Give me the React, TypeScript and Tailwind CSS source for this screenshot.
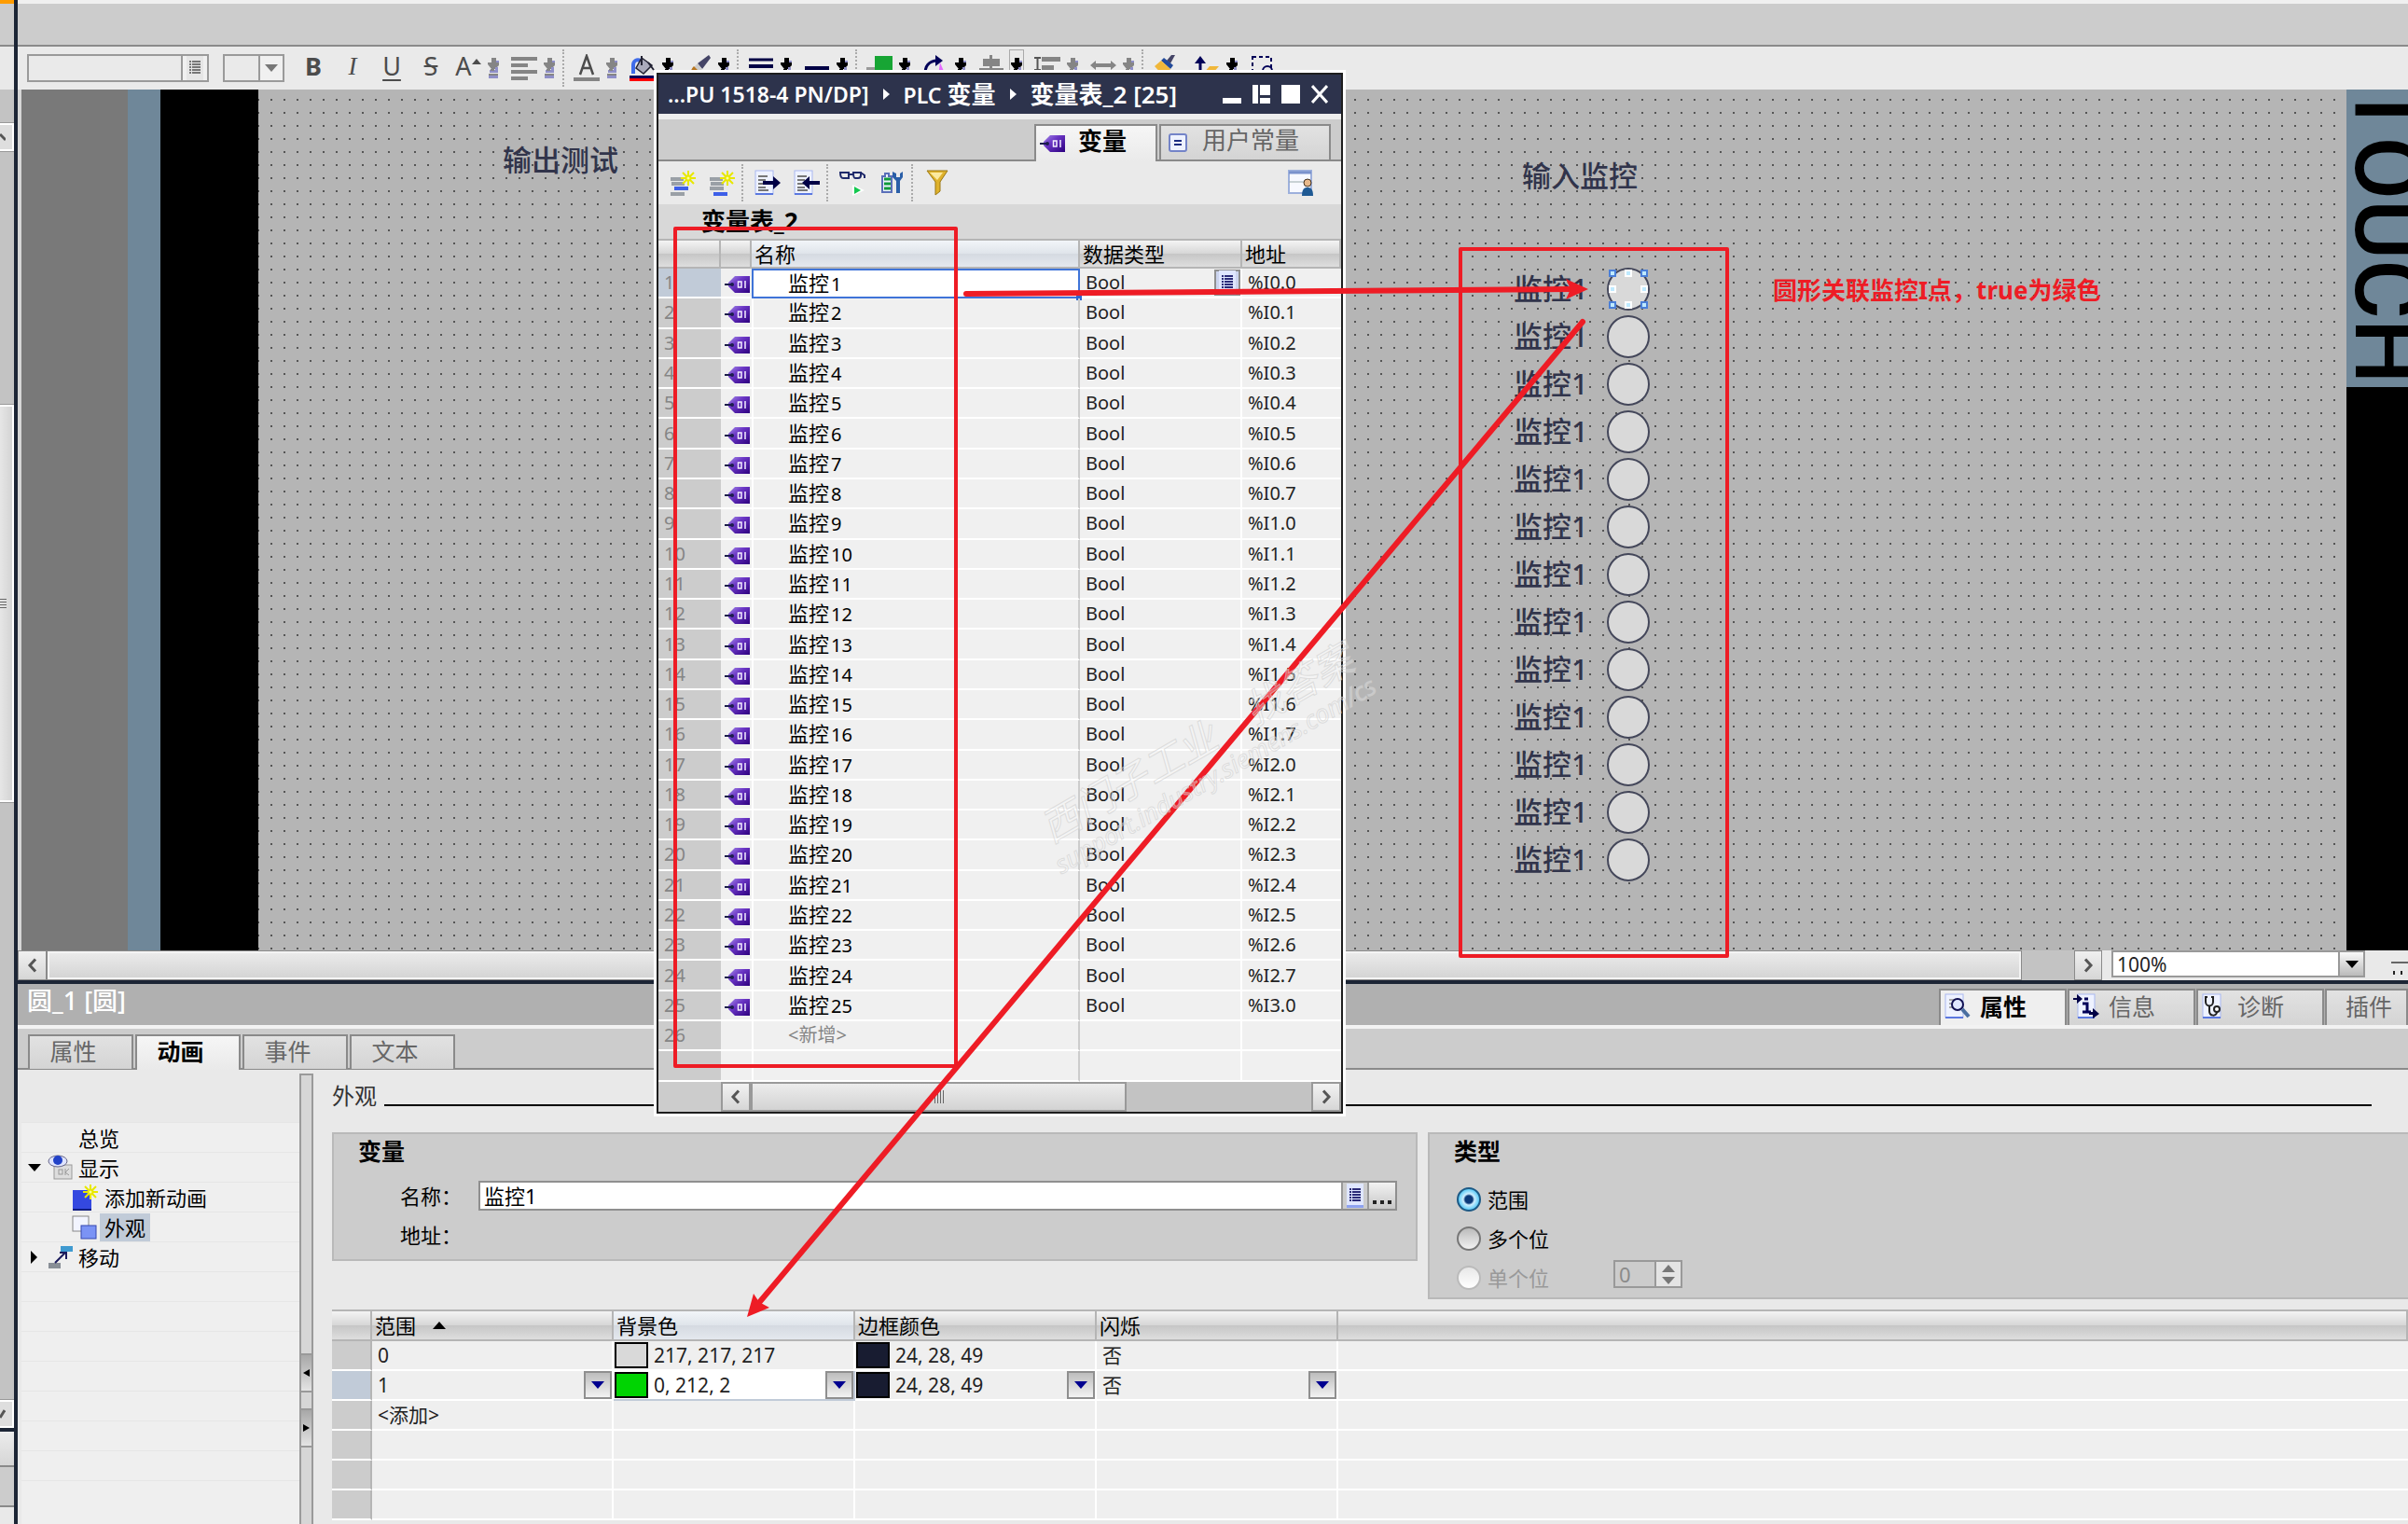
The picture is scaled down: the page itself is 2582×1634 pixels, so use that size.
import type { ReactNode } from "react";
import clsx from "clsx";

interface Tag {
  id: number;
  name: string;
  address: string;
}

const tags: Tag[] = Array.from({ length: 25 }, (_, i) => {
  // %I0.0, %I0.1, ... eight bits to a byte
  return { id: i + 1, name: `监控${i + 1}`, address: `%I${Math.floor(i / 8)}.${i % 8}` };
});

const lamps = Array.from({ length: 13 }, (_, i) => i);

/* ---------- small glyphs ---------- */

function Chevron({ dir }: { dir: "left" | "right" }) {
  return (
    <svg width="12" height="16" viewBox="0 0 12 16" fill="none" stroke="#555" strokeWidth="3">
      <path d={dir === "left" ? "M9 1.500L3 8l6 6.500" : "M3 1.500L9 8l-6 6.500"} />
    </svg>
  );
}

function Triangle({ color = "#000", up = false }: { color?: string; up?: boolean }) {
  return (
    <svg width="14" height="8" viewBox="0 0 14 8" fill={color}>
      <path d={up ? "M7 0l7 8H0z" : "M0 0h14L7 8z"} />
    </svg>
  );
}

function DropMark({ muted = false }: { muted?: boolean }) {
  const c = muted ? "#858585" : "#000";
  return (
    <svg width="12" height="22" viewBox="0 0 12 22">
      <path d="M4 0h5v5h3v3l-4 4H4L0 7V5h4z" fill={c} />
      <path d="M9 3h3v2H9zM8 10h3v3H8zM2 13h9v3H2z" fill="#8f8fc8" />
      <path d="M3 12h4v2H3zM1 17h10v2H1z" fill={c} />
      <path d="M1 19h10v3H1z" fill="#8f8fc8" />
    </svg>
  );
}

function TagIcon() {
  return (
    <svg width="27" height="18" viewBox="0 0 27 18">
      <defs>
        <linearGradient id="tag" x1="0" y1="0" x2="1" y2="1">
          <stop offset="0" stopColor="#a58be8" />
          <stop offset="0.4" stopColor="#6a35c4" />
          <stop offset="1" stopColor="#2d007f" />
        </linearGradient>
      </defs>
      <path d="M4 7L11 0h16v18H11L4 11z" fill="url(#tag)" />
      <path d="M0 9h8" stroke="#1c1c4d" strokeWidth="2" />
      <circle cx="8" cy="9" r="2" fill="#1c1c4d" />
      <path d="M14.500 6h3.500v6h-3.500zM22 5v8" fill="none" stroke="#f4eeff" strokeWidth="1.500" />
    </svg>
  );
}

function ListIcon({ muted = false }: { muted?: boolean }) {
  const c = muted ? "#777" : "#2b2b78";
  return (
    <svg width="18" height="26" viewBox="0 0 18 26">
      <rect x="0" y="0" width="18" height="26" fill={muted ? "#e6e6e6" : "#dfe6ff"} />
      {!muted && <rect x="0" y="23" width="18" height="3" fill="#8ea2f0" />}
      <path d="M3 6h2M3 9h2M3 12h2M3 15h2M3 18h2M6 6h9M6 9h9M6 12h9M6 15h9M6 18h9" stroke={c} strokeWidth="2" />
    </svg>
  );
}

function Star() {
  return (
    <g stroke="#e8e800" strokeWidth="2">
      <path d="M20 1v16M12 9h16M14 3l12 12M26 3L14 15" />
      <circle cx="20" cy="9" r="2.500" fill="#ffff9a" />
    </g>
  );
}

function AddRowIcon({ last = false }: { last?: boolean }) {
  return (
    <svg width="28" height="28" viewBox="0 0 28 28">
      <path d="M1 8h14v4H1zM2 13h14v4H2z" fill="#9aa0a6" />
      <path d={last ? "M1 18h15v4H1z" : "M1 24h15v4H1z"} fill="#9aa0a6" />
      <path d={last ? "M5 24h15v4H5z" : "M5 18h15v4H5z"} fill="#3d5fe8" />
      <Star />
    </svg>
  );
}

function PageIcon({ children }: { children: ReactNode }) {
  return (
    <svg width="28" height="28" viewBox="0 0 28 28">
      <rect x="1" y="1" width="19" height="25" fill="#eef2ff" stroke="#a9b8f0" />
      <path d="M1 26h19" stroke="#5b78e0" strokeWidth="2" />
      {children}
    </svg>
  );
}

const textLines = <path d="M4 7h10M4 11h8M4 15h10M4 19h8M4 22h11" stroke="#777" strokeWidth="2" />;

/* ---------- left neighbour pane ---------- */

function LeftStrip() {
  return (
    <aside className="flex w-[19px] shrink-0 flex-col overflow-hidden border-r-4 border-[#1c2535] bg-[#c3c3c3]">
      <div className="h-1 bg-[#ff9c00]" />
      <div className="h-[46px] border-b-2 border-[#8a8a8a] bg-[#ccc]" />
      <div className="h-[46px] bg-[#e9e9e9]" />
      <div className="mt-9 flex h-[30px] items-center justify-start border-2 border-l-0 border-white bg-[#dedede] outline outline-[#999]">
        <svg width="6" height="14" viewBox="0 0 6 14" stroke="#555" strokeWidth="3">
          <path d="M0 4l6 6" />
        </svg>
      </div>
      <div className="mt-[272px] flex h-[426px] items-center border-2 border-l-0 border-white bg-gradient-to-r from-[#e6e6e6] to-[#d4d4d4] outline outline-[#999]">
        <svg width="7" height="12" viewBox="0 0 7 12" stroke="#666" strokeWidth="1">
          <path d="M0 1.500h7M0 4.500h7M0 7.500h7M0 10.500h7" />
        </svg>
      </div>
      <div className="mt-auto flex h-[30px] items-center border-2 border-l-0 border-white bg-[#dedede] outline outline-[#999]">
        <svg width="6" height="14" viewBox="0 0 6 14" stroke="#555" strokeWidth="3">
          <path d="M0 11l5-8" />
        </svg>
      </div>
      <div className="h-1 bg-[#1c2535]" />
      <div className="h-9 bg-gradient-to-b from-[#ececec] to-[#d6d6d6]" />
      <div className="h-[45px] border-y-2 border-[#8a8a8a] bg-[#ccc]" />
      <div className="h-[18px] bg-[#e9e9e9]" />
    </aside>
  );
}

/* ---------- editor toolbar ---------- */

function Tool({ label, children, drop, muted, boxed }: {
  label: string;
  children: ReactNode;
  drop?: boolean;
  muted?: boolean;
  boxed?: boolean;
}) {
  return (
    <div className="flex h-10 items-center">
      <button aria-label={label} className="flex h-full w-[38px] items-center justify-center">{children}</button>
      {drop && (
        <button
          aria-label={`${label} ▾`}
          className={clsx("flex h-full w-4 items-center justify-center", boxed && "border border-[#aaa]")}
        >
          <DropMark muted={muted} />
        </button>
      )}
    </div>
  );
}

function Sep({ className = "h-10" }: { className?: string }) {
  return <div className={clsx("-mr-px w-px shrink-0 border-l-2 border-dotted border-[#aaa]", className)} />;
}

function FormatBar() {
  return (
    <div className="flex h-[46px] items-center bg-[#eaeaea] pl-2.5 text-[27px] leading-8 text-[#4c4c4c]">
      <div className="flex h-[30px] w-[195px] border-2 border-[#9a9a9a]">
        <input aria-label="字体" className="min-w-0 flex-1 bg-[#eaeaea]" />
        <button aria-label="字体列表" className="flex w-7 items-center justify-center border-l-2 border-[#9a9a9a] bg-[#f0f0f0]">
          <ListIcon muted />
        </button>
      </div>
      <div className="relative ml-[15px] h-[30px] w-[66px]">
        <select aria-label="字号" className="h-full w-full appearance-none border-2 border-[#9a9a9a] bg-[#eaeaea]" />
        <div className="pointer-events-none absolute inset-y-0 right-0 flex w-7 items-center justify-center border-2 border-[#9a9a9a] bg-[#f0f0f0]">
          <Triangle color="#777" />
        </div>
      </div>
      <div className="ml-2.5 flex items-center pb-1">
        <button className="w-[42px] font-bold">B</button>
        <button className="w-[42px] font-[Liberation_Serif] italic">I</button>
        <button className="w-[42px] underline underline-offset-4">U</button>
        <button className="w-[42px] line-through">S</button>
      </div>
      <div className="flex items-center gap-1.5">
        <Tool label="字号增减" drop muted>
          <span className="pb-1">A</span>
          <svg width="10" height="20" viewBox="0 0 10 20"><path d="M5 0l5 6H0z" fill="#4c4c4c" /></svg>
        </Tool>
        <Tool label="对齐" drop muted>
          <svg width="28" height="26" viewBox="0 0 28 26" stroke="#858585" strokeWidth="4">
            <path d="M0 3h28M0 10h18M0 17h28M0 24h18" />
          </svg>
        </Tool>
        <Sep />
        <Tool label="字体颜色" drop muted>
          <svg width="28" height="30" viewBox="0 0 28 30">
            <path d="M7 22L14 2l7 20M9.500 15h9" fill="none" stroke="#4c4c4c" strokeWidth="2.500" />
            <path d="M0 27h28" stroke="#858585" strokeWidth="4" />
          </svg>
        </Tool>
        <Tool label="填充" drop>
          <svg width="28" height="28" viewBox="0 0 28 28">
            <path d="M4 20V11c0-5 4-7 8-5" fill="none" stroke="#3f6be8" strokeWidth="4" />
            <path d="M13 3l11 8-9 9-8-6z" fill="#aab" stroke="#223" strokeWidth="1.500" />
            <path d="M13 1v10M20 8l6 8" stroke="#223" strokeWidth="2" />
            <path d="M0 22h28v3H0z" fill="#000058" />
            <path d="M0 25h28v3H0z" fill="#f00" />
          </svg>
        </Tool>
        <Tool label="画笔" drop>
          <svg width="26" height="28" viewBox="0 0 26 28">
            <path d="M24 0L12 9l5 6 9-12z" fill="#446" />
            <path d="M12 9l5 6-3 3-6-5z" fill="#ccc" />
            <path d="M8 12l6 6c-3 5-9 7-14 7 4-3 4-9 8-13z" fill="#b8761f" />
          </svg>
        </Tool>
        <Sep />
        <Tool label="线型" drop>
          <svg width="26" height="26" viewBox="0 0 26 26" stroke="#000045">
            <path d="M0 4h26" strokeWidth="3" /><path d="M0 11h26" strokeWidth="4" />
          </svg>
        </Tool>
        <Tool label="线宽" drop>
          <svg width="26" height="26" viewBox="0 0 26 26" stroke="#000045" strokeWidth="4"><path d="M0 13h26" /></svg>
        </Tool>
        <Sep />
        <Tool label="层" drop>
          <svg width="28" height="28" viewBox="0 0 28 28">
            <rect x="0" y="13" width="10" height="12" fill="#999" />
            <rect x="9" y="1" width="19" height="19" fill="#17a534" />
          </svg>
        </Tool>
        <Tool label="旋转" drop>
          <svg width="28" height="28" viewBox="0 0 28 28">
            <path d="M4 22C1 12 8 6 16 6" fill="none" stroke="#000058" strokeWidth="3" />
            <path d="M14 0l8 6-8 6z" fill="#000058" />
            <path d="M19 8l6 14h-8z" fill="#e56bff" />
          </svg>
        </Tool>
        <Tool label="排列" drop boxed>
          <svg width="26" height="28" viewBox="0 0 26 28" fill="#858585">
            <path d="M4 4h18v8H4zM11 0h3v20h-3zM0 14h26v3H0z" />
          </svg>
        </Tool>
        <Tool label="间距" drop muted>
          <svg width="28" height="28" viewBox="0 0 28 28">
            <path d="M8 2h20v5H8zM8 11h13v5H8zM8 22h20v5H8z" fill="#858585" />
            <path d="M0 3h7M0 16h7M3.500 3v13" stroke="#555" strokeWidth="2" />
          </svg>
        </Tool>
        <Tool label="同宽" drop muted>
          <svg width="28" height="24" viewBox="0 0 28 24">
            <path d="M0 9l6-5v3h16V4l6 5-6 5v-3H6v3z" fill="#858585" />
          </svg>
        </Tool>
        <Sep />
        <Tool label="格式刷">
          <svg width="24" height="28" viewBox="0 0 24 28">
            <path d="M22 0l-5 9-4-3 5-6z" fill="#446" />
            <path d="M10 3l10 8-3 4L7 6z" fill="#224a9a" />
            <path d="M7 6l10 9-6 9L0 12z" fill="#f0b73a" />
          </svg>
        </Tool>
        <Tool label="Tab 顺序" drop>
          <svg width="28" height="28" viewBox="0 0 28 28">
            <path d="M7 26V8" stroke="#000058" strokeWidth="3" /><path d="M1 9l6-8 6 8z" fill="#000058" />
            <path d="M10 20l7-8h10l-7 8z" fill="#f0b73a" />
          </svg>
        </Tool>
        <Tool label="选择">
          <svg width="26" height="28" viewBox="0 0 26 28" fill="none" stroke="#000058">
            <rect x="2" y="2" width="20" height="20" strokeWidth="2" strokeDasharray="4 3" />
            <circle cx="18" cy="17" r="5" strokeWidth="2" fill="#eaeaea" />
          </svg>
        </Tool>
      </div>
    </div>
  );
}

/* ---------- screen canvas ---------- */

function Handles() {
  const pos = [
    "left-0 top-0", "left-[17px] top-0", "right-0 top-0",
    "left-0 top-[17px]", "right-0 top-[17px]",
    "left-0 bottom-0", "left-[17px] bottom-0", "right-0 bottom-0",
  ];
  return (
    <>
      {pos.map((p, i) => (
        <span
          key={p}
          className={clsx("absolute h-2 w-2 border-2 bg-[#bfeaff]", p, i === 1 || i === 3 || i === 4 || i === 6 ? "border-white" : "border-[#4a7fd8]")}
        />
      ))}
    </>
  );
}

function Canvas() {
  return (
    <div className="flex h-[923px] shrink-0 overflow-hidden border-l-4 border-[#d6d6d6]">
      <div className="w-[114px] shrink-0 bg-[#797979]" />
      <div className="w-[35px] shrink-0 bg-[#6f8799]" />
      <div className="w-[105px] shrink-0 bg-black" />
      <div className="relative flex-1 bg-[#b5b5b5] bg-[conic-gradient(from_270deg_at_2px_2px,#555_90deg,transparent_0)] bg-[size:14px_14px] bg-[position:-1px_10px] text-[31px] leading-[51px] font-medium text-[#31344b]">
        <div className="absolute top-[50px] left-[262px]">输出测试</div>
        <div className="absolute top-[67px] left-[1355px]">输入监控</div>
        <div className="absolute top-[188px] left-[1346px] flex flex-col">
          {lamps.map((i) => <span key={i}>监控1</span>)}
        </div>
        <div className="absolute top-[188px] left-[1446px] flex flex-col">
          {lamps.map((i) => (
            <div key={i} className="flex h-[51px] items-center">
              <div className="relative h-[46px] w-[46px] rounded-full border-2 border-[#44475a] bg-[#d9d9d9]">
                {i === 0 && <Handles />}
              </div>
            </div>
          ))}
        </div>
      </div>
      <div className="w-[66px] shrink-0 bg-black">
        <div className="h-[319px] overflow-hidden bg-[#6f8799]">
          <div className="-mt-2 w-[86px] font-[Roboto] text-[98px] leading-[86px] font-medium text-black [writing-mode:vertical-rl]">
            TOUCH
          </div>
        </div>
      </div>
    </div>
  );
}

function CanvasScroll() {
  return (
    <div className="flex h-8 shrink-0 bg-[#e9e9e9]">
      <button aria-label="向左" className="flex w-[31px] items-center justify-center border border-[#8a8a8a] bg-gradient-to-b from-[#f0f0f0] to-[#d6d6d6]">
        <Chevron dir="left" />
      </button>
      <div className="flex flex-1 bg-[#c3c3c3] pr-14">
        <div className="flex-1 border border-[#8a8a8a] bg-gradient-to-b from-[#ececec] to-[#d3d3d3] shadow-[inset_0_0_0_2px_#f4f4f4]" />
      </div>
      <button aria-label="向右" className="flex w-[30px] items-center justify-center border border-[#8a8a8a] bg-gradient-to-b from-[#f0f0f0] to-[#d6d6d6]">
        <Chevron dir="right" />
      </button>
      <div className="relative ml-2.5 h-[29px] w-[272px]">
        <select aria-label="缩放" className="h-full w-full appearance-none border-2 border-[#999] bg-white pl-1 text-[21px] leading-6 text-[#222]">
          <option>100%</option>
        </select>
        <div className="pointer-events-none absolute inset-y-0 right-0 flex w-[29px] items-center justify-center border-2 border-[#999] bg-gradient-to-b from-[#fafafa] to-[#bbb]">
          <Triangle />
        </div>
      </div>
      <svg className="ml-7" width="18" height="32" viewBox="0 0 18 32">
        <path d="M0 13h18" stroke="#666" strokeWidth="2" />
        <path d="M3 22v4M11 22v4" stroke="#222" strokeWidth="2" />
      </svg>
    </div>
  );
}

/* ---------- inspector ---------- */

function InspectorTab({ label, active, icon }: { label: string; active?: boolean; icon?: ReactNode }) {
  return (
    <button
      className={clsx(
        "flex h-[39px] items-center border-2 border-b-0 border-[#8a8a8a] pb-1 text-[25px] leading-8",
        icon ? "w-[137px] gap-2.5 pl-1" : "w-[89px] pl-5",
        active ? "bg-[#efefef] font-bold text-black" : "bg-gradient-to-b from-[#e2e2e2] to-[#d4d4d4] text-[#666]",
      )}
    >
      {icon}
      {label}
    </button>
  );
}

function SubTab({ label, active }: { label: string; active?: boolean }) {
  return (
    <button
      className={clsx(
        "w-[113px] border-2 border-b-0 border-[#8a8a8a] pr-4 text-[25px] leading-8",
        active
          ? "h-[39px] bg-gradient-to-b from-[#f6f6f6] to-[#e9e9e9] pb-2 font-bold text-black"
          : "h-[37px] bg-gradient-to-b from-[#e2e2e2] to-[#d4d4d4] pb-1.5 text-[#666]",
      )}
    >
      {label}
    </button>
  );
}

function TreeRow({ children }: { children?: ReactNode }) {
  return <div className="flex h-8 shrink-0 items-center border-t border-[#e6e6e6]">{children}</div>;
}

function Tree() {
  return (
    <nav className="flex w-[302px] shrink-0 flex-col overflow-hidden pt-14 pl-1 text-[22px] leading-7">
      <div className="flex-1 bg-[#efefef]">
        <TreeRow><span className="pl-[61px]">总览</span></TreeRow>
        <TreeRow>
          <span className="flex w-7 justify-center"><Triangle /></span>
          <svg width="28" height="28" viewBox="0 0 28 28">
            <rect x="7" y="11" width="19" height="15" fill="#ddd" stroke="#999" />
            <ellipse cx="11" cy="7" rx="10" ry="6" fill="#dfe4ff" stroke="#668" />
            <circle cx="11" cy="6" r="5" fill="#2242c8" />
            <rect x="12" y="16" width="4" height="5" fill="none" stroke="#999" />
            <path d="M19 15v7M23 15l-4 4 4 3" fill="none" stroke="#999" />
          </svg>
          <span className="pl-[5px]">显示</span>
        </TreeRow>
        <TreeRow>
          <svg className="ml-[54px]" width="30" height="30" viewBox="0 0 30 30">
            <rect x="1" y="7" width="20" height="21" fill="#3448e0" />
            <path d="M1 28h20" stroke="#101c80" strokeWidth="2" />
            <Star />
          </svg>
          <span className="pl-[5px]">添加新动画</span>
        </TreeRow>
        <TreeRow>
          <svg className="ml-[54px]" width="28" height="28" viewBox="0 0 28 28">
            <rect x="1" y="2" width="17" height="16" fill="#f2f4ff" stroke="#888" />
            <rect x="10" y="12" width="16" height="14" fill="#7b93f5" stroke="#3547b0" />
          </svg>
          <span className="ml-[2px] bg-[#c1cbd8] px-[5px] py-[1px]">外观</span>
        </TreeRow>
        <TreeRow>
          <span className="flex w-7 justify-center">
            <svg width="8" height="14" viewBox="0 0 8 14"><path d="M0 0l7 7-7 7z" /></svg>
          </span>
          <svg width="28" height="28" viewBox="0 0 28 28">
            <rect x="14" y="2" width="13" height="6" fill="#3f9ad0" />
            <rect x="1" y="20" width="13" height="6" fill="#888e96" />
            <path d="M8 20L19 9M13 9h7v7" fill="none" stroke="#1b1b5c" strokeWidth="2" />
          </svg>
          <span className="pl-[5px]">移动</span>
        </TreeRow>
        {Array.from({ length: 8 }, (_, i) => <TreeRow key={i} />)}
      </div>
    </nav>
  );
}

function Splitter() {
  return (
    <div className="mt-1 flex w-[15px] shrink-0 flex-col border-2 border-b-0 border-[#9a9a9a] bg-[#d6d6d6] pt-[298px]">
      <button aria-label="收起" className="flex h-[42px] items-center justify-center border-y-2 border-[#999] bg-gradient-to-b from-[#a8a8a8] to-[#e4e4e4]">
        <svg width="7" height="8" viewBox="0 0 7 8"><path d="M7 0v8L0 4z" /></svg>
      </button>
      <button aria-label="展开" className="mt-[17px] flex h-[42px] items-center justify-center border-y-2 border-[#999] bg-gradient-to-b from-[#a8a8a8] to-[#e4e4e4]">
        <svg width="7" height="8" viewBox="0 0 7 8"><path d="M0 0v8l7-4z" /></svg>
      </button>
    </div>
  );
}

function Radio({ label, checked, disabled }: { label: string; checked?: boolean; disabled?: boolean }) {
  return (
    <label className={clsx("flex h-[42px] items-center gap-[7px]", disabled && "text-[#999]")}>
      <input
        type="radio"
        name="kind"
        defaultChecked={checked}
        disabled={disabled}
        className={clsx(
          "h-[26px] w-[26px] shrink-0 appearance-none rounded-full border-2 border-[#777] bg-gradient-to-b from-[#bbb] to-[#f2f2f2]",
          "checked:border-[#1d5a86] checked:bg-[radial-gradient(circle,#0b3a7a_0_4px,#cfefff_6px,#47c4f5_12px)]",
          "disabled:border-[#bbb] disabled:from-[#e8e8e8] disabled:to-white",
        )}
      />
      {label}
    </label>
  );
}

function VariablePanel() {
  return (
    <section className="h-[138px] w-[1164px] border-2 border-[#b9b9b9] bg-[#ccc]">
      <h3 className="pt-0.5 pl-[26px] text-[25px] leading-8 font-bold">变量</h3>
      <div className="mt-4 flex h-8 items-center pr-5 pl-[71px]">
        <label htmlFor="tagName" className="w-[84px]">名称：</label>
        <div className="flex h-8 flex-1 border-2 border-[#8f8f8f] bg-white">
          <input id="tagName" defaultValue="监控1" className="min-w-0 flex-1 pl-1" />
          <button aria-label="选择变量" className="flex w-7 items-center justify-center border-l-2 border-[#999] bg-[#ccc]"><ListIcon /></button>
          <button aria-label="浏览" className="flex w-[30px] items-end justify-center border-l-2 border-[#999] bg-gradient-to-b from-[#f2f2f2] to-[#c8c8c8] pb-1">
            <svg width="20" height="5" viewBox="0 0 20 5" fill="#222"><path d="M0 0h4v4H0zM8 0h4v4H8zM16 0h4v4h-4z" /></svg>
          </button>
        </div>
      </div>
      <div className="mt-2.5 pl-[71px] leading-8">地址：</div>
    </section>
  );
}

function TypePanel() {
  return (
    <section className="h-[179px] flex-1 border-2 border-r-0 border-[#b9b9b9] bg-[#ccc] pl-[26px]">
      <h3 className="pt-0.5 pb-[15px] text-[25px] leading-8 font-bold">类型</h3>
      <fieldset className="pl-[3px]">
        <Radio label="范围" checked />
        <Radio label="多个位" />
        <div className="flex items-center">
          <div className="w-[168px]"><Radio label="单个位" disabled /></div>
          <div className="mb-2 flex h-[30px] w-[74px] border-2 border-[#999] text-[#8a8a8a]">
            <input aria-label="位号" defaultValue="0" disabled className="min-w-0 flex-1 pl-1" />
            <div className="flex w-7 flex-col border-l-2 border-[#999] bg-[#e4e4e4]">
              <button aria-label="增" disabled className="flex flex-1 items-center justify-center"><Triangle up color="#777" /></button>
              <button aria-label="减" disabled className="flex flex-1 items-center justify-center"><Triangle color="#777" /></button>
            </div>
          </div>
        </div>
      </fieldset>
    </section>
  );
}

function DropCell({ value, swatch }: { value: string; swatch?: string }) {
  return (
    <div className="relative flex h-[30px] items-center">
      {swatch && <span className={clsx("ml-px h-[28px] w-9 shrink-0 border-2 border-black", swatch)} />}
      <select aria-label={value} className="h-full min-w-0 flex-1 appearance-none bg-transparent pl-[6px]">
        <option>{value}</option>
      </select>
      <div className="pointer-events-none absolute inset-y-0 right-0 flex w-[30px] items-center justify-center border-2 border-[#8f8f8f] bg-gradient-to-b from-[#bdbdbd] to-[#f2f2f2]">
        <Triangle color="#00008f" />
      </div>
    </div>
  );
}

function Swatch({ value, color }: { value: string; color: string }) {
  return (
    <div className="flex h-[30px] items-center">
      <span className={clsx("ml-px h-[28px] w-9 border-2 border-black", color)} />
      <span className="pl-[6px]">{value}</span>
    </div>
  );
}

const headBg = "bg-[linear-gradient(#f4f4f4,#d6d6d6_50%,#c6c6c6_51%,#dedede)]";
const headBgBlue = "bg-[linear-gradient(#f2f5f9,#dfe4ea_50%,#d5dae1_51%,#e4e8ee)]";

function RangeTable() {
  const head = "border-r-2 border-y-2 border-[#b5b5b5] pl-[3px] text-left font-normal";
  const cell = "border-r-2 border-b-2 border-white p-0";
  const rowHead = "border-b-2 border-r-2 border-b-white border-r-[#b5b5b5] bg-[#ccc]";
  return (
    <table className="w-full table-fixed border-separate border-spacing-0 bg-[#efefef] text-[21px] leading-7 text-[#222]">
      <colgroup>
        <col className="w-[43px]" />
        <col className="w-[259px]" />
        <col className="w-[259px]" />
        <col className="w-[259px]" />
        <col className="w-[259px]" />
        <col />
      </colgroup>
      <thead>
        <tr className="h-[34px] text-[22px] text-black">
          <th className={clsx(head, headBg)} />
          <th className={clsx(head, headBg)}>
            <span className="flex items-center gap-[18px]">范围<Triangle up /></span>
          </th>
          <th className={clsx(head, headBgBlue)}>背景色</th>
          <th className={clsx(head, headBg)}>边框颜色</th>
          <th className={clsx(head, headBg)}>闪烁</th>
          <th className={clsx(head, headBg, "border-r-0")} />
        </tr>
      </thead>
      <tbody>
        <tr className="h-8">
          <td className={rowHead} />
          <td className={cell}><span className="pl-[6px]">0</span></td>
          <td className={cell}><Swatch value="217, 217, 217" color="bg-[#d9d9d9]" /></td>
          <td className={cell}><Swatch value="24, 28, 49" color="bg-[#181c31]" /></td>
          <td className={cell}><span className="pl-[6px]">否</span></td>
          <td className="border-b-2 border-white" />
        </tr>
        <tr className="h-8">
          <td className="border-r-2 border-b-2 border-r-[#b5b5b5] border-b-white bg-[#c1cbd8]" />
          <td className={cell}><DropCell value="1" /></td>
          <td className="border-r-2 border-b-2 border-[#c1cbd8] bg-white p-0"><DropCell value="0, 212, 2" swatch="bg-[#00d402]" /></td>
          <td className={cell}><DropCell value="24, 28, 49" swatch="bg-[#181c31]" /></td>
          <td className={cell}><DropCell value="否" /></td>
          <td className="border-b-2 border-white" />
        </tr>
        {["<添加>", "", "", ""].map((t, i) => (
          <tr key={i} className="h-8">
            <td className={rowHead} />
            <td className={cell}><span className="pl-[6px]">{t}</span></td>
            <td className={cell} />
            <td className={cell} />
            <td className={cell} />
            <td className="border-b-2 border-white" />
          </tr>
        ))}
      </tbody>
    </table>
  );
}

function Inspector() {
  return (
    <div className="flex min-h-0 flex-1 flex-col border-t-4 border-[#1c2535]">
      <div className="flex h-[48px] shrink-0 items-end justify-between border-b-4 border-[#f2f2f2] bg-[#b0b0b0]">
        <h2 className="pb-2.5 pl-2.5 text-[27px] leading-8 font-medium text-white">圆_1 [圆]</h2>
        <div className="flex gap-px">
          <InspectorTab
            label="属性"
            active
            icon={
              <PageIcon>
                <path d="M5 7h8M5 11h6M5 15h6" stroke="#aaa" strokeWidth="2" />
                <circle cx="14" cy="12" r="6" fill="#dfe6ff" stroke="#101050" strokeWidth="2" />
                <path d="M19 17l7 8" stroke="#4a6fa0" strokeWidth="4" />
              </PageIcon>
            }
          />
          <InspectorTab
            label="信息"
            icon={
              <svg width="28" height="28" viewBox="0 0 28 28">
                <rect x="5" y="1" width="18" height="25" fill="#eef2ff" stroke="#a9b8f0" />
                <path d="M5 26h18" stroke="#5b78e0" strokeWidth="2" />
                <path d="M10 11h5v9M10 20h9M12 6h4" fill="none" stroke="#000058" strokeWidth="3" />
                <path d="M0 5h4V1l6 5-6 5V7H0zM17 20h4v-4l7 6-7 5v-4h-4z" fill="#000045" />
              </svg>
            }
          />
          <InspectorTab
            label="诊断"
            icon={
              <PageIcon>
                <path d="M6 4H4v5c0 6 8 6 8 0V4h-2M8 14v5c0 6 8 6 8 1" fill="none" stroke="#222" strokeWidth="2" />
                <circle cx="16" cy="17" r="3" fill="#fff" stroke="#222" strokeWidth="2" />
              </PageIcon>
            }
          />
          <InspectorTab label="插件" />
        </div>
      </div>
      <div className="flex h-[44px] shrink-0 items-end bg-[#ccc]">
        <div className="flex h-full flex-1 items-start gap-0.5 border-b-2 border-[#8a8a8a] pt-1.5 pl-[11px]">
          <SubTab label="属性" />
          <SubTab label="动画" active />
          <SubTab label="事件" />
          <SubTab label="文本" />
        </div>
      </div>
      <div className="flex min-h-0 flex-1 bg-[#e9e9e9]">
        <Tree />
        <Splitter />
        <div className="flex min-w-0 flex-1 flex-col pt-3 pl-5 text-[22px] leading-7 text-black">
          <div className="flex items-center pr-[39px]">
            <h3 className="text-[24px] leading-8 text-[#333]">外观</h3>
            <div className="mt-5 ml-2 h-[2px] flex-1 bg-black" />
          </div>
          <div className="mt-[23px] flex gap-[11px]">
            <VariablePanel />
            <TypePanel />
          </div>
          <div className="mt-[11px]">
            <RangeTable />
          </div>
        </div>
      </div>
    </div>
  );
}

/* ---------- PLC tag window ---------- */

function WindowTitle() {
  const sep = <svg width="7" height="12" viewBox="0 0 7 12" fill="#fff"><path d="M0 0l7 6-7 6z" /></svg>;
  return (
    <div className="flex h-[42px] shrink-0 items-center bg-[#2d334c] pr-[14px] pl-[10px] text-[23px] leading-8 font-semibold text-white">
      <div className="flex flex-1 items-center gap-[15px] whitespace-nowrap">
        <span>...PU 1518-4 PN/DP]</span>
        {sep}
        <span>PLC <span className="text-[26px]">变量</span></span>
        {sep}
        <span className="text-[26px]">变量表_2 [25]</span>
      </div>
      <div className="flex gap-3">
        <button aria-label="最小化"><svg width="20" height="20" viewBox="0 0 20 20" fill="#fff"><path d="M0 14h20v6H0z" /></svg></button>
        <button aria-label="布局"><svg width="19" height="20" viewBox="0 0 19 20" fill="#fff"><path d="M0 0h6v20H0zM8 0h11v11H8zM8 14h11v6H8z" /></svg></button>
        <button aria-label="最大化"><svg width="20" height="20" viewBox="0 0 20 20" fill="#fff"><path d="M0 0h20v20H0z" /></svg></button>
        <button aria-label="关闭"><svg width="18" height="20" viewBox="0 0 18 20" stroke="#fff" strokeWidth="3"><path d="M1 1l16 18M17 1L1 19" /></svg></button>
      </div>
    </div>
  );
}

function WindowTabs() {
  return (
    <div className="flex h-[51px] shrink-0 items-end justify-end gap-0.5 border-t-[6px] border-b-2 border-t-[#ededed] border-b-[#8a8a8a] bg-[#ccc] pr-[11px] text-[26px] leading-8">
      <button className="-mb-0.5 flex h-[40px] w-[132px] items-center border-2 border-b-0 border-[#8a8a8a] bg-gradient-to-b from-[#f6f6f6] to-[#eaeaea] pl-1 font-bold text-black">
        <TagIcon />
        <span className="pb-1.5 pl-3.5">变量</span>
      </button>
      <button className="flex h-[38px] w-[184px] items-center border-2 border-b-0 border-[#8a8a8a] bg-gradient-to-b from-[#e2e2e2] to-[#d4d4d4] pl-2 text-[#666]">
        <svg width="20" height="20" viewBox="0 0 20 20">
          <rect x="1" y="1" width="18" height="18" rx="2" fill="#eef2ff" stroke="#7484c8" strokeWidth="2" />
          <path d="M6 8h8M6 12h8" stroke="#1c2c80" strokeWidth="2" />
        </svg>
        <span className="pb-1.5 pl-4">用户常量</span>
      </button>
    </div>
  );
}

function WindowTools() {
  const btn = "flex w-[42px] justify-center";
  return (
    <div className="flex h-[46px] shrink-0 items-center bg-[#eaeaea] pr-[29px] pl-[5px]">
      <button aria-label="插入行" className={btn}><AddRowIcon /></button>
      <button aria-label="添加行" className={btn}><AddRowIcon last /></button>
      <Sep />
      <div className="w-1.5" />
      <button aria-label="导出" className={btn}>
        <PageIcon>{textLines}<path d="M9 12h11V7l8 7-8 7v-5H9z" fill="#000045" /></PageIcon>
      </button>
      <button aria-label="导入" className={btn}>
        <PageIcon>{textLines}<path d="M28 12H17V7l-8 7 8 7v-5h11z" fill="#000045" /></PageIcon>
      </button>
      <Sep />
      <div className="w-1.5" />
      <button aria-label="监视" className={btn}>
        <svg width="28" height="28" viewBox="0 0 28 28">
          <path d="M1 3h9v6H4c-2 0-3-2-3-6zM15 3h8v3c0 2-1 3-3 3h-3c-2 0-2-3-2-6zM10 5h5M23 3l4 3v3" fill="none" stroke="#1f2a6b" strokeWidth="2" />
          <path d="M14 16l13 6-13 6z" fill="#fff" />
          <path d="M16 18l7 4-7 4z" fill="#14c850" />
        </svg>
      </button>
      <button aria-label="保持性" className={btn}>
        <svg width="24" height="24" viewBox="0 0 24 24">
          <path d="M2 5h3V2h4v3h3v17H2z" fill="#eef2ff" stroke="#5a6fb8" strokeWidth="2" />
          <path d="M4 8h7M4 13h7M4 18h7" stroke="#0f9a3a" strokeWidth="3" />
          <path d="M13 0v6l4 4v13h4V10l3-4V0l-3 2v4h-4V2z" fill="#2a5fa8" />
        </svg>
      </button>
      <Sep />
      <div className="w-1.5" />
      <button aria-label="筛选" className={btn}>
        <svg width="24" height="28" viewBox="0 0 24 28">
          <path d="M1 1h22l-8 12v10l-5 4V13z" fill="#dfb22c" stroke="#9a7713" />
          <path d="M4 3h14l-6 8z" fill="#fbe9a0" />
        </svg>
      </button>
      <button aria-label="布局设置" className="ml-auto">
        <svg width="28" height="28" viewBox="0 0 28 28">
          <rect x="1" y="1" width="24" height="24" fill="#f7f9ff" stroke="#9db0dc" strokeWidth="2" />
          <path d="M1 3h24" stroke="#7a92cc" strokeWidth="3" />
          <path d="M1 13h24" stroke="#9aa" />
          <circle cx="21" cy="14" r="4" fill="#e8b98a" stroke="#432" />
          <path d="M15 28c0-8 3-9 6-9s6 1 6 9z" fill="#1f5a94" />
        </svg>
      </button>
    </div>
  );
}

function TagTable() {
  const head = "border-r-2 border-y-2 border-[#b5b5b5] py-0 pr-0 pl-[3px] text-left font-normal";
  const cell = "border-b-2 border-white p-0";
  const rowNo = "border-b-2 border-white py-0 pr-0 pl-1.5 text-[#858585]";
  const nameCell = "border-x-2 border-b-2 border-b-white border-l-white border-r-[#ccc] py-0 pr-0 pl-[37px]";
  return (
    <div className="min-h-0 flex-1 bg-[#f0f0f0]">
      <table className="h-full w-full table-fixed border-separate border-spacing-0 text-[20px] leading-6 text-[#222]">
        <colgroup>
          <col className="w-[67px]" />
          <col className="w-[33px]" />
          <col className="w-[352px]" />
          <col className="w-[174px]" />
          <col />
        </colgroup>
        <thead>
          <tr className="h-8 text-[22px] text-black">
            <th className={clsx(head, headBg)} />
            <th className={clsx(head, headBg)} />
            <th className={clsx(head, headBgBlue)}>名称</th>
            <th className={clsx(head, headBg)}>数据类型</th>
            <th className={clsx(head, headBg, "border-r-0")}>地址</th>
          </tr>
        </thead>
        <tbody>
          {tags.map((t) => {
            const sel = t.id === 1;
            return (
              <tr key={t.id} className="h-8">
                <td className={clsx(rowNo, sel ? "bg-[#c1cbd8]" : "bg-[#ccc]")}>{t.id}</td>
                <td className={cell}><div className="flex justify-end pt-1 pr-0.5"><TagIcon /></div></td>
                <td className={clsx("relative text-black", sel ? "border-2 border-[#3f74d8] bg-white py-0 pr-0 pl-[37px]" : nameCell)}>
                  <span className="text-[22px]">{t.name.slice(0, 2)}</span>
                  <span className="pl-0.5">{t.name.slice(2)}</span>
                  {sel && <i className="absolute -right-1 -bottom-1 h-1.5 w-1.5 bg-[#2d66d2]" />}
                </td>
                <td className="border-r-2 border-b-2 border-white py-0 pr-0 pl-1.5">
                  <div className="flex h-7 items-center justify-between">
                    Bool
                    {sel && (
                      <button aria-label="选择数据类型" className="flex h-7 w-7 items-center justify-center border-2 border-[#8f8f8f] bg-[#ccd4ee]">
                        <ListIcon />
                      </button>
                    )}
                  </div>
                </td>
                <td className={cell}><span className="pl-1.5">{t.address}</span></td>
              </tr>
            );
          })}
          <tr className="h-8">
            <td className={clsx(rowNo, "bg-[#ccc]")}>26</td>
            <td className={cell} />
            <td className={clsx(nameCell, "text-[#858585]")}>&lt;新增&gt;</td>
            <td className="border-r-2 border-b-2 border-white" />
            <td className={cell} />
          </tr>
          <tr className="h-8">
            <td className={clsx(rowNo, "bg-[#ccc]")} />
            <td className={cell} />
            <td className={nameCell} />
            <td className="border-r-2 border-b-2 border-white" />
            <td className={cell} />
          </tr>
        </tbody>
      </table>
    </div>
  );
}

function TagWindow() {
  return (
    <div className="absolute top-[75px] left-[701px] h-[1122px] w-[742px] border-[3px] border-white">
      <div className="flex h-full flex-col overflow-hidden border-2 border-[#1e1e1e] bg-[#ccc]">
        <WindowTitle />
        <WindowTabs />
        <WindowTools />
        <div className="h-[37px] shrink-0 bg-[#d8d8d8] pt-0.5 pl-[46px] text-[26px] leading-8 font-bold text-black">变量表_2</div>
        <TagTable />
        <div className="flex h-8 shrink-0 pl-[67px]">
          <button aria-label="向左" className="flex w-8 items-center justify-center border-2 border-[#999] bg-gradient-to-b from-[#f2f2f2] to-[#d6d6d6]"><Chevron dir="left" /></button>
          <div className="flex flex-1 bg-[#c3c3c3]">
            <div className="flex w-[403px] items-center justify-center border-2 border-[#999] bg-gradient-to-b from-[#ececec] to-[#d3d3d3]">
              <svg width="10" height="14" viewBox="0 0 10 14" stroke="#666"><path d="M.5 0v14M3.500 0v14M6.500 0v14M9.500 0v14" /></svg>
            </div>
          </div>
          <button aria-label="向右" className="flex w-8 items-center justify-center border-2 border-[#999] bg-gradient-to-b from-[#f2f2f2] to-[#d6d6d6]"><Chevron dir="right" /></button>
        </div>
      </div>
    </div>
  );
}

/* ---------- markup on top ---------- */

function Annotations() {
  return (
    <div className="pointer-events-none absolute inset-0 overflow-hidden">
      <svg className="absolute inset-0 h-full w-full" fill="none" stroke="#ee1c25">
        <rect x="724" y="245" width="301" height="898" strokeWidth="4" strokeLinejoin="round" />
        <rect x="1566" y="267" width="286" height="758" strokeWidth="4" strokeLinejoin="round" />
        <path d="M1036 315L1686 310" strokeWidth="6" strokeLinecap="round" />
        <path d="M1703 310l-24-11 5 11-5 11z" fill="#ee1c25" stroke="none" />
        <path d="M1697 345L812 1399" strokeWidth="6" strokeLinecap="round" />
        <path d="M801 1412l7-25 6 9 11 6z" fill="#ee1c25" stroke="none" />
      </svg>
      <div className="absolute top-[291px] left-[1901px] text-[26px] leading-10 font-bold whitespace-nowrap text-[#ee1c25]">
        圆形关联监控I点，true为绿色
      </div>
      <div className="absolute top-[770px] left-[1091px] w-[400px] -rotate-[30deg] text-center whitespace-nowrap italic text-white/30 [-webkit-text-stroke:1px_rgba(205,205,205,0.6)]">
        <div className="text-[42px] leading-[48px]">西门子工业　找答案</div>
        <div className="text-[27px] leading-8">support.industry.siemens.com/cs</div>
      </div>
    </div>
  );
}

export default function App() {
  return (
    <div className="relative flex min-h-screen w-full overflow-hidden bg-[#e9e9e9] font-['Noto_Sans','Noto_Sans_CJK_SC',sans-serif]">
      <LeftStrip />
      <main className="flex min-w-0 flex-1 flex-col">
        <div className="h-1 shrink-0 bg-[#f0f0f0]" />
        <div className="h-[46px] shrink-0 border-b-2 border-[#8a8a8a] bg-[#ccc]" />
        <FormatBar />
        <Canvas />
        <CanvasScroll />
        <Inspector />
      </main>
      <TagWindow />
      <Annotations />
    </div>
  );
}
